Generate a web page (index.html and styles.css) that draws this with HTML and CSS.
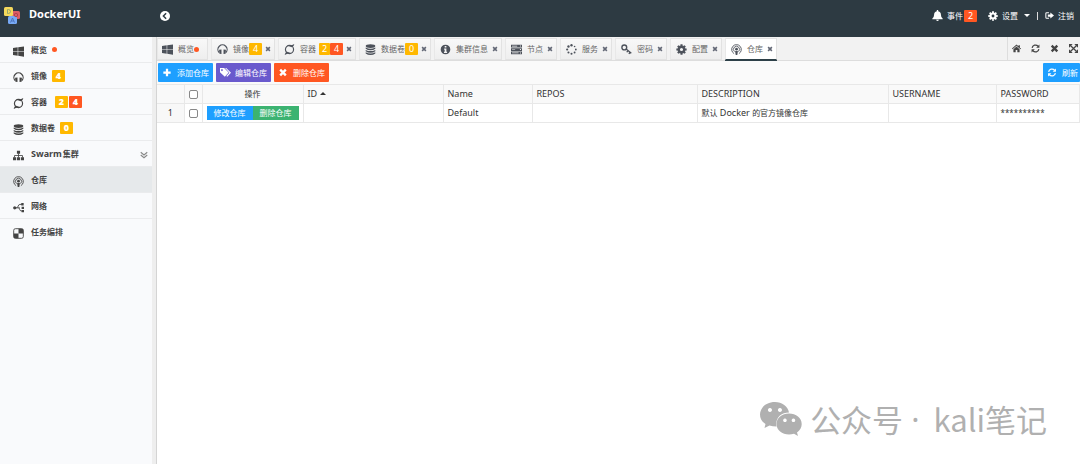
FILE: index.html
```html
<!DOCTYPE html>
<html lang="zh-CN">
<head>
<meta charset="utf-8">
<title>DockerUI</title>
<link rel="stylesheet" href="styles.css">
</head>
<body>
<svg class="sprite" aria-hidden="true">
  <symbol id="windows" viewBox="0 0 16 16"><path d="M0 2.800 6.800 1.900V7.600H0zM7.600 1.800 16 .6V7.600H7.600zM0 8.400H6.800V14.200L0 13.200zM7.600 8.400H16V15.500L7.600 14.300z"/></symbol>
  <symbol id="headset" viewBox="0 0 16 16"><path d="M3 12.500A6.700 6.700 0 1 1 13 12.500" fill="none" stroke="currentColor" stroke-width="1.700"/><path d="M3 8.500 6.500 8V14.500L3.500 14zM13 8.500 9.500 8V14.500L12.500 14z"/></symbol>
  <symbol id="ring" viewBox="0 0 16 16"><circle cx="8" cy="8" r="5.900" fill="none" stroke="currentColor" stroke-width="1.700"/><path d="M5 2.600Q11 3 15 0 14.500 4 11.500 4.600zM11 13.400Q5 13 1 16 1.500 12 4.500 11.400z"/></symbol>
  <symbol id="database" viewBox="0 0 16 16"><ellipse cx="8" cy="3" rx="7" ry="2.700"/><path d="M1 5Q8 8.500 15 5V7Q12 9.200 8 9.200T1 7zM1 8.600Q8 12 15 8.600V10.500Q12 12.700 8 12.700T1 10.500zM1 12Q8 15.500 15 12V13.700Q12 16 8 16T1 13.700z"/></symbol>
  <symbol id="sitemap" viewBox="0 0 16 16"><path d="M5.700 1h4.600v4.500H5.700zM0 10.500h4.500V15H0zM5.700 10.500h4.600V15H5.700zM11.500 10.500H16V15h-4.500z"/><path d="M8 5v6M2.200 11V8h11.600v3" fill="none" stroke="currentColor" stroke-width="1.200"/></symbol>
  <symbol id="podcast" viewBox="0 0 16 16"><g fill="none" stroke="currentColor" stroke-width="1.300"><path d="M4.500 14A7 7 0 1 1 11.500 14"/><path d="M5 11A4.400 4.400 0 1 1 11 11"/></g><circle cx="8" cy="7.500" r="2"/><path d="M6 10.200H10L9.200 16H6.800z"/></symbol>
  <symbol id="usb" viewBox="0 0 16 16"><circle cx="2.500" cy="8.500" r="2.300"/><path d="M3 8.500H10M5 8.500C8 8.500 7 3.500 10 3.500h3M8 8.500C10 8.500 9 13 12 13h1" fill="none" stroke="currentColor" stroke-width="1.300"/><path d="M12 1.500h3.500v3.500H12zM12.500 11.500H16V15h-3.500zM12.500 7H16v3h-3.500z"/></symbol>
  <symbol id="checker" viewBox="0 0 16 16"><rect x="1" y="1" width="14" height="14" rx="2.500" fill="none" stroke="currentColor" stroke-width="1.300"/><path d="M8 1h5q2 0 2 2v5H8zM1 8h7v7H3q-2 0-2-2z"/></symbol>
  <symbol id="info" viewBox="0 0 16 16"><path fill-rule="evenodd" d="M8 1a7 7 0 1 0 0 14A7 7 0 0 0 8 1zM6.800 3h2.500v2.200H6.800zM6 6.500h3.300v4.700h1V13H5.800v-1.800h1V8.200H6z"/></symbol>
  <symbol id="server" viewBox="0 0 16 16"><path fill-rule="evenodd" d="M0 1h16v4H0zM0 6h16v4H0zM0 11h16v4H0zM1.500 2.500v1H9v-1zM1.500 7.500v1H6v-1zM1.500 12.500v1H11v-1zM13 2.300v1.400h1.500V2.300zM13 7.300v1.400h1.500V7.300zM13 12.300v1.400h1.500v-1.400z"/></symbol>
  <symbol id="spinner" viewBox="0 0 16 16"><circle cx="8" cy="1.800" r="1.700"/><circle cx="12.500" cy="3.600" r="1.200"/><circle cx="14.300" cy="8" r="1.300"/><circle cx="12.500" cy="12.400" r="1.400"/><circle cx="8" cy="14.200" r="1.500"/><circle cx="3.600" cy="12.400" r="1.500"/><circle cx="1.700" cy="8" r="1.600"/><circle cx="3.600" cy="3.600" r="1.700"/></symbol>
  <symbol id="key" viewBox="0 0 16 16"><circle cx="4.800" cy="5" r="3.500" fill="none" stroke="currentColor" stroke-width="2"/><path d="M7 7 15 13.500M10 9.500 8.500 12M13 12 11.500 14.500" fill="none" stroke="currentColor" stroke-width="2"/></symbol>
  <symbol id="gear" viewBox="0 0 16 16"><circle cx="8" cy="8" r="4" fill="none" stroke="currentColor" stroke-width="3.400"/><path d="M8 .5V3M8 13v2.500M.5 8H3M13 8h2.500M2.700 2.700l1.800 1.800M11.500 11.500l1.800 1.800M2.700 13.300l1.800-1.800M11.500 4.500l1.800-1.800" stroke="currentColor" stroke-width="3"/></symbol>
  <symbol id="times" viewBox="0 0 16 16"><path d="M3 3 13 13M13 3 3 13" stroke="currentColor" stroke-width="4.200"/></symbol>
  <symbol id="plus" viewBox="0 0 16 16"><path d="M8 1.500v13M1.500 8h13" stroke="currentColor" stroke-width="4"/></symbol>
  <symbol id="tags" viewBox="0 0 16 16"><path fill-rule="evenodd" d="M0 1.500h6L12.500 8 7 14 0 7.500zM2.800 3.200a1.300 1.300 0 1 0 .1 0z"/><path d="M7.500 1.500h1.500L16 8.500l-5.500 5.700-1.300-1L13.700 8.300z"/></symbol>
  <symbol id="refresh" viewBox="0 0 16 16"><path d="M2 7A6 6 0 0 1 12.500 4M14 9A6 6 0 0 1 3.500 12" fill="none" stroke="currentColor" stroke-width="2.200"/><path d="M15 .8V6.600H9.200zM1 15.200V9.400h5.800z"/></symbol>
  <symbol id="home" viewBox="0 0 16 16"><path d="M8 1 16 8.200 15 9.300 8 3.200 1 9.300 0 8.200zM11.500 2H14v5l-2.500-2.200zM8 4.500 13.500 9.300V14.500H9.500V10.500h-3v4h-4V9.300z"/></symbol>
  <symbol id="expand" viewBox="0 0 16 16"><path d="M3 3 13 13M13 3 3 13" stroke="currentColor" stroke-width="2.200"/><path d="M0 0h6.500L0 6.500zM16 0v6.500L9.500 0zM0 16V9.500L6.500 16zM16 16H9.500L16 9.500z"/></symbol>
  <symbol id="bell" viewBox="0 0 16 16"><path d="M7 0h2v1.800Q13 2.500 13 7q0 4 2.500 5.500v.8H.5v-.8Q3 11 3 7q0-4.500 4-5.200zM6 14h4q-.5 2-2 2t-2-2z"/></symbol>
  <symbol id="logout" viewBox="0 0 16 16"><path d="M7 3H3Q1.500 3 1.500 4.500v7Q1.500 13 3 13h4" fill="none" stroke="currentColor" stroke-width="1.800"/><path d="M5 6h4.500V2.500L16 8l-6.500 5.500V10H5z"/></symbol>
  <symbol id="back" viewBox="0 0 16 16"><circle cx="8" cy="8" r="8" /><path d="M9.800 3.700 5.500 8l4.300 4.300" fill="none" stroke="#2d3a42" stroke-width="2.400"/></symbol>
  <symbol id="chevrons" viewBox="0 0 16 16"><path d="M1.500 2.500 8 8l6.500-5.500M1.500 8 8 13.500 14.500 8" fill="none" stroke="currentColor" stroke-width="2.200"/></symbol>
  <symbol id="caret-down" viewBox="0 0 8 4"><path d="M0 0h8L4 4z"/></symbol>
  <symbol id="caret-up" viewBox="0 0 8 4"><path d="M0 4h8L4 0z"/></symbol>
</svg>

<header class="topbar">
  <div class="brand">
    <svg class="logo" viewBox="0 0 18 18"><rect x="8" y="4" width="8" height="8" rx="1.500" fill="#db5e66"/><rect x="0" y="0" width="9" height="9" rx="1.500" fill="#f5d95c"/><rect x="4" y="9" width="9" height="8" rx="1.500" fill="#77a9f5"/><g fill="none" stroke-width=".9"><path d="M3.500 2.500v4h1q2-.3 2-2t-2-2z" stroke="#8aa06b"/><circle cx="12" cy="8" r="1.700" stroke="#a8414d"/><path d="M6.500 15.500 8.500 11l2 4.500M7.200 14h2.600" stroke="#496fb5"/></g></svg>
    <h1>DockerUI</h1>
  </div>
  <button class="plain" aria-label="收起菜单"><svg class="ico"><use href="#back"/></svg></button>
  <nav class="account">
    <a href="#"><svg class="ico"><use href="#bell"/></svg>事件<b class="badge red">2</b></a>
    <button class="plain settings"><svg class="ico small"><use href="#gear"/></svg>设置<svg class="caret"><use href="#caret-down"/></svg></button>
    <span class="bar"></span>
    <a href="#"><svg class="ico small"><use href="#logout"/></svg>注销</a>
  </nav>
</header>

<div class="shell">
  <nav class="sidebar">
    <a href="#"><svg class="ico"><use href="#windows"/></svg>概览<i class="dot"></i></a>
    <a href="#"><svg class="ico"><use href="#headset"/></svg>镜像<span class="badges"><b class="badge">4</b></span></a>
    <a href="#"><svg class="ico"><use href="#ring"/></svg>容器<span class="badges wide"><b class="badge">2</b><b class="badge red">4</b></span></a>
    <a href="#"><svg class="ico"><use href="#database"/></svg>数据卷<span class="badges"><b class="badge">0</b></span></a>
    <a href="#"><svg class="ico"><use href="#sitemap"/></svg><span class="latin">Swarm</span>&#8202;集群<svg class="more"><use href="#chevrons"/></svg></a>
    <a href="#" class="current"><svg class="ico"><use href="#podcast"/></svg>仓库</a>
    <a href="#"><svg class="ico"><use href="#usb"/></svg>网络</a>
    <a href="#"><svg class="ico"><use href="#checker"/></svg>任务编排</a>
  </nav>

  <main class="content">
    <div class="tabbar">
      <div class="tabs">
        <a href="#" class="tab"><svg class="ico"><use href="#windows"/></svg>概览<i class="dot"></i></a>
        <a href="#" class="tab"><svg class="ico"><use href="#headset"/></svg>镜像<b class="badge">4</b><svg class="close"><use href="#times"/></svg></a>
        <a href="#" class="tab"><svg class="ico"><use href="#ring"/></svg>容器<span class="pair"><b class="badge">2</b><b class="badge red">4</b></span><svg class="close"><use href="#times"/></svg></a>
        <a href="#" class="tab"><svg class="ico"><use href="#database"/></svg>数据卷<b class="badge">0</b><svg class="close"><use href="#times"/></svg></a>
        <a href="#" class="tab"><svg class="ico"><use href="#info"/></svg>集群信息<svg class="close"><use href="#times"/></svg></a>
        <a href="#" class="tab"><svg class="ico"><use href="#server"/></svg>节点<svg class="close"><use href="#times"/></svg></a>
        <a href="#" class="tab"><svg class="ico"><use href="#spinner"/></svg>服务<svg class="close"><use href="#times"/></svg></a>
        <a href="#" class="tab"><svg class="ico"><use href="#key"/></svg>密码<svg class="close"><use href="#times"/></svg></a>
        <a href="#" class="tab"><svg class="ico"><use href="#gear"/></svg>配置<svg class="close"><use href="#times"/></svg></a>
        <a href="#" class="tab active"><svg class="ico"><use href="#podcast"/></svg>仓库<svg class="close"><use href="#times"/></svg></a>
      </div>
      <div class="tools">
        <button class="plain" aria-label="主页"><svg class="ico small"><use href="#home"/></svg></button>
        <button class="plain" aria-label="刷新标签"><svg class="ico small"><use href="#refresh"/></svg></button>
        <button class="plain" aria-label="关闭标签"><svg class="ico small"><use href="#times"/></svg></button>
        <button class="plain" aria-label="全屏"><svg class="ico small"><use href="#expand"/></svg></button>
      </div>
    </div>

    <div class="toolbar">
      <button class="btn blue"><svg class="ico small"><use href="#plus"/></svg>添加仓库</button>
      <button class="btn purple"><svg class="ico"><use href="#tags"/></svg>编辑仓库</button>
      <button class="btn orange"><svg class="ico small"><use href="#times"/></svg>删除仓库</button>
      <button class="btn blue reload"><svg class="ico small"><use href="#refresh"/></svg>刷新</button>
    </div>

    <table class="grid">
      <colgroup><col class="c-num"><col class="c-check"><col class="c-ops"><col class="c-id"><col class="c-name"><col class="c-repos"><col class="c-desc"><col class="c-user"><col></colgroup>
      <thead>
        <tr><th></th><th class="mid"><input type="checkbox" aria-label="全选"></th><th class="mid cjk">操作</th><th>ID<svg class="caret sort"><use href="#caret-up"/></svg></th><th>Name</th><th>REPOS</th><th>DESCRIPTION</th><th>USERNAME</th><th>PASSWORD</th></tr>
      </thead>
      <tbody>
        <tr><td class="mid num">1</td><td class="mid"><input type="checkbox" aria-label="选择 Default"></td><td><div class="ops"><button class="op blue">修改仓库</button><button class="op green">删除仓库</button></div></td><td></td><td>Default</td><td></td><td class="cjk">默认<span class="latin"> Docker </span>的官方镜像仓库</td><td></td><td class="secret">**********</td></tr>
      </tbody>
    </table>
  </main>
</div>

<div class="watermark">
  <svg class="wechat" viewBox="0 0 42 36"><path fill-rule="evenodd" d="M15 1C6.500 1 0 6.500 0 13.500c0 4 2 7.200 5.500 9.500L4.500 27l5-2.500q3 1 7 1C15 17 21 11.500 29 11.500 28 5.500 22 1 15 1zM10 7a2 2 0 1 1-.1 0zM20 7a2 2 0 1 1-.1 0z"/><path fill-rule="evenodd" d="M29 12.500c-7 0-12.500 4.500-12.500 10.500S22 33.500 29 33.500q2.500 0 5-.8L38 35l-1-3.500c3-2 4.700-5 4.700-8.500 0-6-5.700-10.500-12.700-10.500zM25 17.500a1.800 1.800 0 1 1-.1 0zM33.500 17.500a1.800 1.800 0 1 1-.1 0z"/></svg>
  <span>公众号</span><span class="point">·</span><span>kali笔记</span>
</div>
</body>
</html>
```

FILE: styles.css
```css
* { box-sizing: border-box; }

body {
  display: flex;
  flex-direction: column;
  min-height: 100vh;
  margin: 0;
  overflow-x: hidden;
  background: #fff;
  color: #444;
  font: 8px/12px "Noto Sans", "Noto Sans CJK SC", sans-serif;
}

a { color: inherit; text-decoration: none; }
button { font: inherit; color: inherit; cursor: pointer; }
svg { fill: currentColor; flex: none; }
.sprite { position: absolute; width: 0; height: 0; }
.ico { width: 11px; height: 11px; }
.ico.small { width: 9px; height: 9px; }
.caret { width: 6px; height: 3px; }
.latin { font-size: 9px; white-space: pre; }
.plain { display: flex; align-items: center; padding: 0; border: 0; background: none; }

.badge {
  width: 13px;
  border-radius: 1px;
  background: #ffb800;
  color: #fff;
  font-size: 9px;
  line-height: 12px;
  text-align: center;
}
.red { background: #ff5722; }
.dot { width: 5px; height: 5px; border-radius: 50%; background: #ff5722; }

.topbar {
  display: flex;
  height: 37px;
  padding: 0 6px 6px 4px;
  align-items: center;
  background: #2d3a42;
  color: #fff;
}
.topbar .plain .ico { width: 10px; height: 10px; }
.brand { display: flex; width: 156px; gap: 7px; align-items: center; }
.logo { width: 18px; height: 18px; }
.brand h1 { margin: 0 0 3px; font-size: 11px; line-height: 16px; }
.account { display: flex; margin-left: auto; align-items: center; gap: 11px; }
.account a, .settings { display: flex; align-items: center; gap: 4px; }
.account .badge { margin-left: -3px; font-weight: 400; }
.account .caret { margin-left: 2px; }
.account .bar { width: 1px; height: 8px; margin: 0 -4px; background: #ddd; }

.shell { display: flex; flex: 1; }

.sidebar {
  flex: none;
  width: 157px;
  border-right: 1px solid #d4d4d4;
  background: linear-gradient(to right, #f9fafc 152px, #eee 152px);
  font-weight: 700;
}
.sidebar a {
  display: flex;
  width: 152px;
  height: 26px;
  padding-left: 13px;
  align-items: center;
  border-bottom: 1px solid #eaebed;
}
.sidebar a:last-child { border-bottom: 0; }
.sidebar .current { background: #e6e9eb; }
.sidebar .ico { margin-right: 7px; margin-top: 3px; }
.sidebar .dot { margin-left: 5px; }
.badges { display: flex; gap: 1px; margin-left: 5px; }
.badges.wide { margin-left: 8px; }
.more { width: 8px; height: 8px; margin: 2px 4px 0 auto; color: #888; }

.content { flex: 1; min-width: 0; }

.tabbar { display: flex; height: 24px; background: #f2f2f2; border-bottom: 1px solid #ddd; }
.tabs { display: flex; gap: 3px; padding-top: 1px; }
.tab {
  display: flex;
  height: 22px;
  padding: 0 3px 0 5px;
  align-items: center;
  border: 1px solid #e2e2e2;
  border-left-color: #e8e8e8;
  background: linear-gradient(#f8f8f8, #eee);
  color: #666;
}
.tab:first-child { padding-left: 4px; }
.tab .ico { margin-right: 5px; color: #4d525b; }
.tab .badge { font-weight: 400; }
.tab .dot { margin-right: 5px; }
.tab .close { width: 6px; height: 6px; margin-left: 4px; color: #626775; }
.tab .badge + .close, .pair + .close { margin-left: 3px; }
.pair { display: flex; margin-left: 3px; }
.pair .badge:first-child { width: 11px; }
.tab.active { background: #fff; border-bottom-color: #2d4048; box-shadow: 0 1px #2d4048; }
.tools {
  display: flex;
  margin-left: auto;
  padding: 0 2px 0 4px;
  gap: 10px;
  border-left: 1px solid #ddd;
}

.toolbar { display: flex; gap: 3px; padding: 2px 0 2px 1px; background: #fafafa; }
.btn {
  display: flex;
  height: 19px;
  padding: 0 4px;
  gap: 5px;
  align-items: center;
  border: 0;
  border-radius: 1px;
  color: #fff;
}
.btn .ico { width: 10px; }
.btn.purple { gap: 4px; }
.btn.purple .ico { width: 11px; }
.blue { background: #1e9fff; }
.purple { background: #6a5acd; }
.orange { background: #ff5722; }
.green { background: #3cb371; }
.reload { margin-left: auto; padding-right: 2px; }

.grid { width: 100%; table-layout: fixed; border-collapse: collapse; }
.c-num { width: 27px; }
.c-check { width: 18px; }
.c-ops { width: 101px; }
.c-id { width: 140px; }
.c-name { width: 89px; }
.c-repos { width: 165px; }
.c-desc { width: 191px; }
.c-user { width: 108px; }
.grid th, .grid td {
  height: 19px;
  padding: 0 0 0 4px;
  border: 1px solid #e8e8e8;
  border-left: 0;
  color: #333;
  font-size: 9px;
  font-weight: 400;
  text-align: left;
  white-space: nowrap;
}
.grid th { background: #f9f9f9; }
.grid .cjk, .grid .secret { font-size: 8px; }
.grid .mid { padding: 0; text-align: center; }
.grid .num { background: #f8f8f8; }
.grid input {
  display: block;
  appearance: none;
  width: 9px;
  height: 9px;
  margin: 0 auto;
  border: 1px solid #888;
  border-radius: 2px;
  background: #fff;
}
.sort { margin-left: 3px; vertical-align: 2px; }
.ops { display: flex; }
.op { width: 46px; height: 14px; padding: 0; border: 0; color: #fff; line-height: 14px; font-size: 8px; }

.watermark {
  position: absolute;
  right: 33px;
  bottom: 25px;
  display: flex;
  align-items: center;
  gap: 8px;
  color: #b0b0b0;
  font: 31px/40px "Noto Sans CJK SC", sans-serif;
}
.watermark .point { margin-right: 6px; font-family: "Noto Sans", sans-serif; }
.wechat { width: 42px; height: 36px; }
```
